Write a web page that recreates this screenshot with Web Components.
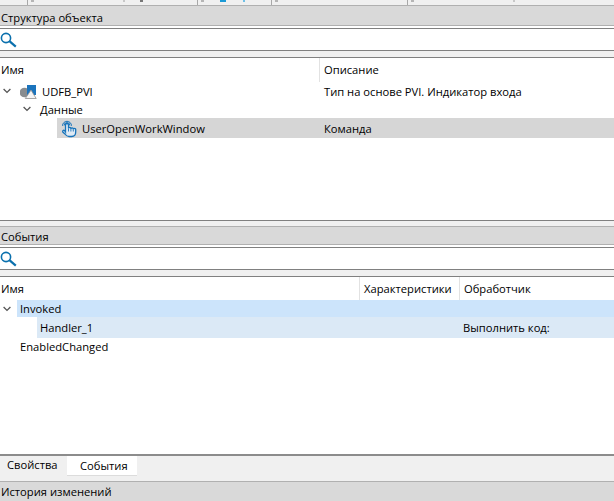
<!DOCTYPE html>
<html>
<head>
<meta charset="utf-8">
<style>
  html, body { margin: 0; padding: 0; }
  body {
    width: 614px; height: 501px; overflow: hidden;
    display: flex; flex-direction: column;
    background: #fff; color: #000;
    font: 11.2px/16px "Open Sans", "Noto Sans", sans-serif;
  }
</style>
</head>
<body>
<toolbar-edge></toolbar-edge>

<dock-panel height="215" closed>
  <panel-header slot="head" fill="19" nudge="2">Структура объекта</panel-header>
  <search-box slot="head"></search-box>
  <tree-head slot="head" columns="320px 1fr" pad="4">
    <span>Имя</span><span>Описание</span>
  </tree-head>
  <tree-row first-col="320" height="19" lead="20" chevron="3" icon="type" cell-pad="4" shift="2">
    <span>UDFB_PVI</span><span>Тип на основе PVI. Индикатор входа</span>
  </tree-row>
  <tree-row first-col="320" height="18" lead="37" chevron="23" pad="3" shift="2">
    <span>Данные</span>
  </tree-row>
  <tree-row first-col="320" height="20" lead="57" pad="4" icon="hand" fill="#d6d6d6" cell-pad="4" shift="2">
    <span>UserOpenWorkWindow</span><span>Команда</span>
  </tree-row>
</dock-panel>

<dock-panel height="233" gap>
  <panel-header slot="head" fill="17" nudge="1">События</panel-header>
  <search-box slot="head"></search-box>
  <tree-head slot="head" columns="360px 100px 1fr" pad="4">
    <span>Имя</span><span>Характеристики</span><span>Обработчик</span>
  </tree-head>
  <tree-row first-col="460" height="17" lead="17" chevron="3" pad="3" fill="#cce4fb">
    <span>Invoked</span>
  </tree-row>
  <tree-row first-col="460" height="21" lead="37" pad="3" fill="#dbe9f6" cell-pad="3">
    <span>Handler_1</span><span>Выполнить код:</span>
  </tree-row>
  <tree-row first-col="460" height="18" lead="17" pad="3">
    <span>EnabledChanged</span>
  </tree-row>
</dock-panel>

<tab-strip>
  <span>Свойства</span>
  <span active>События</span>
</tab-strip>
<panel-header fill="19" nudge="0" tight>История изменений</panel-header>

<script>
const EDGE_CELLS = [
  [27, []],
  [169, [[3, 3, '#b5b5b5'], [95, 2, '#c8c8c8'], [112, 3, '#777']]],
  [73, [[3, 3, '#b5b5b5'], [22, 6, '#1b9ad6'], [45, 2, '#6fc0e6']]],
  [135, [[3, 3, '#b5b5b5']]],
  [0, [[3, 3, '#b5b5b5'], [105, 2, '#c8c8c8']]]
];

class ToolbarEdge extends HTMLElement {
  constructor() {
    super();
    const cells = EDGE_CELLS.map(([w, marks]) => `
      <div class="cell" style="${w ? `width:${w}px` : 'flex:1;border:0'}">
        ${marks.map(([x, mw, c]) => `<i style="left:${x}px;width:${mw}px;background:${c}"></i>`).join('')}
      </div>`).join('');
    this.attachShadow({ mode: 'open' }).innerHTML = `
      <style>
        :host { display: flex; flex: none; height: 5px; background: #f0f0f0; }
        .cell { position: relative; border-right: 1px solid #a8a8a8; box-sizing: content-box; }
        i { position: absolute; top: 0; height: 2px; }
      </style>${cells}`;
  }
}

class PanelHeader extends HTMLElement {
  constructor() {
    super();
    const h = Number(this.getAttribute('fill') || 19);
    const nudge = Number(this.getAttribute('nudge') || 0);
    const tight = this.hasAttribute('tight');
    this.attachShadow({ mode: 'open' }).innerHTML = `
      <style>
        :host { display: block; flex: none; }
        .title {
          height: ${h - nudge}px; padding-top: ${nudge}px; line-height: ${h + 1}px; padding-left: 1px;
          background: #d9d9d9; border-top: 1px solid #b0b0b0;
          ${tight ? '' : 'border-bottom: 1px solid #b0b0b0; margin-bottom: 2px;'}
        }
      </style>
      <div class="title"><slot></slot></div>`;
  }
}

class SearchBox extends HTMLElement {
  constructor() {
    super();
    this.attachShadow({ mode: 'open' }).innerHTML = `
      <style>
        :host { display: block; }
        .box { height: 21px; border-top: 1px solid #808080; border-bottom: 1px solid #808080; background: #fff; display: flex; align-items: center; }
        .gap { height: 6px; background: #f0f0f0; border-bottom: 1px solid #808080; }
        svg { display: block; }
      </style>
      <div class="box">
        <svg width="17" height="17" viewBox="0 0 17 17" fill="none" stroke="#0a70ad">
          <circle cx="6" cy="7" r="4.600" stroke-width="1.600"/>
          <path d="M9.400 10.200 15.800 15.600" stroke-width="2.200"/>
        </svg>
      </div>
      <div class="gap"></div>`;
  }
}

class TreeHead extends HTMLElement {
  constructor() {
    super();
    this.attachShadow({ mode: 'open' }).innerHTML = `
      <style>
        :host { display: grid; height: 23px; }
        ::slotted(span) { padding-left: ${this.getAttribute('pad')}px; line-height: 24px; border-right: 1px solid #e2e2e2; box-sizing: border-box; }
        ::slotted(span:first-child) { padding-left: 1px; }
        ::slotted(span:last-child) { border-right: 0; }
      </style>
      <slot></slot>`;
    this.style.gridTemplateColumns = this.getAttribute('columns');
  }
}

const ICONS = {
  type: `<svg width="22" height="16" viewBox="0 0 22 16">
      <circle cx="4.500" cy="8.500" r="4.800" fill="#888c8f"/>
      <path d="M7 1h9v10H7z" fill="#1b74bd"/>
      <path d="M11 6l5.200 8.500H5.300z" fill="#f4f4f4" stroke="#8f8f8f" stroke-width=".8"/>
    </svg>`,
  hand: `<svg width="21" height="18" viewBox="0 0 21 18" fill="none" stroke="#1673ba" stroke-width="1.300">
      <path d="M1.500 5.800a4.500 4.500 0 0 1 9 0M3.100 5.500a2.900 2.900 0 0 1 5.800 0" stroke-width="1"/>
      <path fill="#dfeaf4" d="M4.500 12V5a1.500 1.500 0 0 1 3 0v3.500a1.200 1.200 0 0 1 2.400 0v.5a1.200 1.200 0 0 1 2.400 0v.5a1.200 1.200 0 0 1 2.400 0v2.500c0 2.500-1.500 4.500-4 4.500H8c-2 0-3-1-4-2.500L1.800 12c-.6-1.300.8-2.300 1.800-1.300l.9 1.300z"/>
      <path d="M7.500 8.500v3M9.900 9v2.500M12.300 9.500v2" stroke-width=".9"/>
    </svg>`
};

const CHEVRON = `<svg width="8" height="6" viewBox="0 0 8 6" fill="none" stroke="#555" stroke-width="1.300"><path d="M.6 1l3.400 3.400L7.400 1"/></svg>`;

class TreeRow extends HTMLElement {
  constructor() {
    super();
    const attr = (n, d) => this.getAttribute(n) ?? d;
    const lead = Number(attr('lead', 0));
    const firstCol = Number(attr('first-col', 320));
    const chevron = attr('chevron', null);
    const icon = ICONS[attr('icon')] || '';
    this.firstElementChild.slot = 'name';
    this.attachShadow({ mode: 'open' }).innerHTML = `
      <style>
        :host { display: flex; height: ${attr('height', 18)}px; align-items: stretch; }
        .lead { width: ${lead}px; flex: none; display: flex; align-items: center; padding-left: ${chevron || 0}px; box-sizing: border-box; }
        .body {
          flex: 1; display: grid; grid-template-columns: ${firstCol - lead}px 1fr; align-items: center;
          padding-top: ${attr('shift', 0)}px; box-sizing: border-box;
          background: ${attr('fill', 'transparent')};
        }
        .name { display: flex; align-items: center; padding-left: ${attr('pad', 0)}px; }
        .ic { display: flex; flex: none; }
        ::slotted(span) { white-space: nowrap; }
        ::slotted(span:not([slot])) { padding-left: ${attr('cell-pad', 0)}px; }
      </style>
      <div class="lead">${chevron !== null ? CHEVRON : ''}</div>
      <div class="body">
        <div class="name"><span class="ic">${icon}</span><slot name="name"></slot></div>
        <slot></slot>
      </div>`;
  }
}

class DockPanel extends HTMLElement {
  constructor() {
    super();
    this.attachShadow({ mode: 'open' }).innerHTML = `
      <style>
        :host {
          display: flex; flex-direction: column; flex: none; height: ${this.getAttribute('height')}px; overflow: hidden;
          ${this.hasAttribute('closed') ? 'border-bottom: 1px solid #808080;' : ''}
        }
        .gap { height: 5px; flex: none; background: #f0f0f0; display: ${this.hasAttribute('gap') ? 'block' : 'none'}; }
        .rows { flex: 1; min-height: 0; }
      </style>
      <div class="gap"></div>
      <slot name="head"></slot>
      <div class="rows"><slot></slot></div>`;
  }
}

class TabStrip extends HTMLElement {
  constructor() {
    super();
    this.attachShadow({ mode: 'open' }).innerHTML = `
      <style>
        :host { display: flex; flex: none; height: 27px; align-items: flex-start; background: #f0f0f0; border-top: 2px solid #8c8c8c; box-sizing: border-box; }
        ::slotted(span) { box-sizing: border-box; width: 67px; height: 19px; padding-left: 7px; line-height: 17px; }
        ::slotted(span[active]) { width: 70px; height: 20px; padding-left: 13px; line-height: 19px; background: #fff; border-bottom: 1px solid #dcdcdc; }
      </style>
      <slot></slot>`;
  }
}

customElements.define('toolbar-edge', ToolbarEdge);
customElements.define('panel-header', PanelHeader);
customElements.define('search-box', SearchBox);
customElements.define('tree-head', TreeHead);
customElements.define('tree-row', TreeRow);
customElements.define('dock-panel', DockPanel);
customElements.define('tab-strip', TabStrip);
</script>
</body>
</html>
